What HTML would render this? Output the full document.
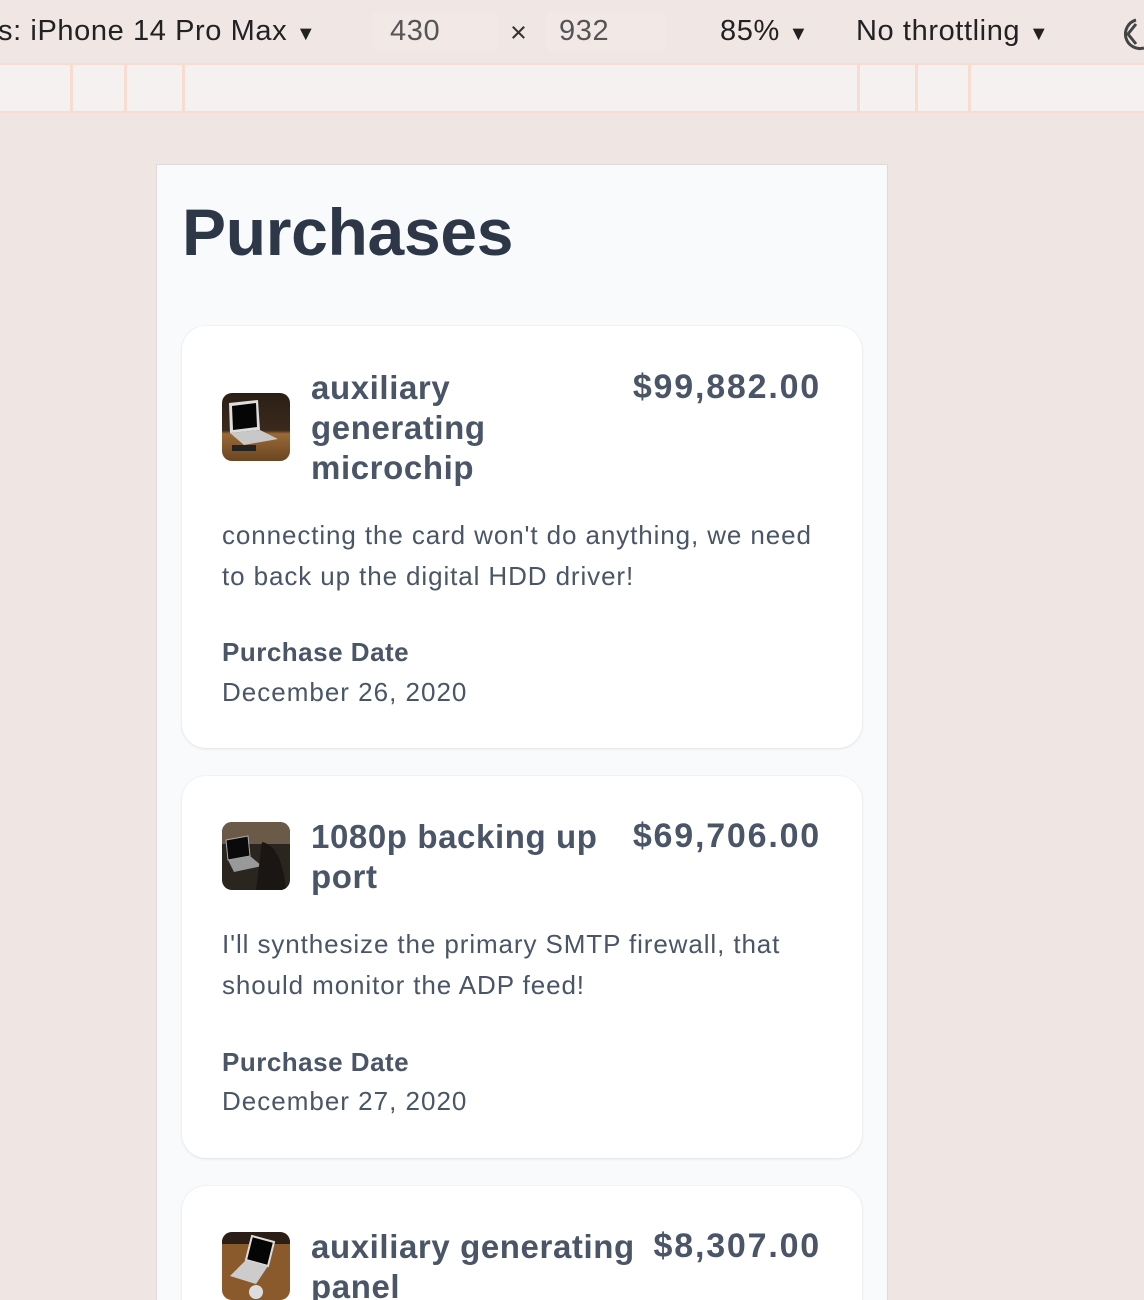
<!DOCTYPE html>
<html><head><meta charset="utf-8"><style>
*{margin:0;padding:0;box-sizing:border-box}
html{width:1144px;height:1300px;overflow:hidden}
body{width:1144px;height:1300px;overflow:hidden;background:#efe5e3;font-family:"Liberation Sans",Arial,sans-serif;position:relative}
.a{position:absolute;white-space:nowrap}
.top{position:absolute;left:0;top:0;width:1144px;height:63px;background:#f0e6e4;font-size:29px;color:#222;letter-spacing:0.6px}
.ruler{position:absolute;left:0;top:63px;width:1144px;height:50px;background:#f6f1f1;border-top:2px solid #f7dccf;border-bottom:2px solid #f7dccf}
.tick{position:absolute;top:0;width:3px;height:46px;background:#f7dccf}
.box{position:absolute;border-radius:6px;background:#f2e9e7;color:#555}
.panel{position:absolute;left:156px;top:164px;width:732px;height:1140px;background:#f8fafc;border:1px solid #dcdadc}
.card{position:absolute;left:182px;width:680px;background:#fff;border-radius:24px;box-shadow:0 1px 3px rgba(0,0,0,.08),0 0 0 1px rgba(0,0,0,.02);overflow:hidden}
.img{position:absolute;left:40px;width:68px;height:68px;border-radius:10px;overflow:hidden}
.t{position:absolute;left:129px;font-size:33px;font-weight:bold;line-height:40px;color:#4a5568;white-space:nowrap;letter-spacing:0.6px}
.p{position:absolute;right:41px;font-size:34px;font-weight:bold;color:#4a5568;white-space:nowrap;letter-spacing:1.8px}
.d{position:absolute;left:40px;font-size:26px;line-height:41px;color:#4a5568;white-space:nowrap;letter-spacing:0.9px}
.l{position:absolute;left:40px;font-size:26px;font-weight:bold;color:#4a5568;letter-spacing:0.5px}
.dt{position:absolute;left:40px;font-size:26px;color:#4a5568;letter-spacing:1px}
</style></head><body>
<div class="top">
<div class="a" style="left:-2px;top:15px">s: iPhone 14 Pro Max <span style="font-size:20px">▼</span></div>
<div class="box" style="left:372px;top:11px;width:126px;height:40px"></div>
<div class="a" style="left:390px;top:15px;color:#555">430</div>
<div class="a" style="left:510px;top:17px;color:#333">×</div>
<div class="box" style="left:546px;top:11px;width:120px;height:40px"></div>
<div class="a" style="left:559px;top:15px;color:#555">932</div>
<div class="a" style="left:720px;top:15px">85% <span style="font-size:20px">▼</span></div>
<div class="a" style="left:856px;top:15px">No throttling <span style="font-size:20px">▼</span></div>
<svg class="a" style="left:1124px;top:14px" width="24" height="38" viewBox="0 0 24 38"><path d="M12 6 A12 12 0 1 0 20 34" fill="none" stroke="#444" stroke-width="3"/><path d="M12 10 L4 20 L12 30" fill="none" stroke="#444" stroke-width="3"/></svg>
</div>
<div class="ruler">
<div class="tick" style="left:70px"></div><div class="tick" style="left:124px"></div><div class="tick" style="left:182px"></div>
<div class="tick" style="left:857px"></div><div class="tick" style="left:915px"></div><div class="tick" style="left:968px"></div>
</div>
<div class="panel"></div>
<div class="a" style="left:182px;top:194px;font-size:66px;font-weight:bold;color:#2d3748;letter-spacing:-0.3px">Purchases</div>

<svg width="0" height="0" style="position:absolute"><defs>
<linearGradient id="g1" x1="0" y1="0" x2="0" y2="1"><stop offset="0" stop-color="#2a1e16"/><stop offset=".55" stop-color="#3b2a1c"/><stop offset=".6" stop-color="#9a6a36"/><stop offset="1" stop-color="#6b4522"/></linearGradient>
</defs></svg>

<div class="card" style="top:326px;height:422px">
<div class="img" style="top:67px"><svg width="68" height="68"><rect width="68" height="68" fill="url(#g1)"/><path d="M7 10 L36 7 L38 37 L8 40Z" fill="#ddd"/><path d="M10 13 L34 10 L35 34 L11 37Z" fill="#050505"/><path d="M8 40 L38 37 L56 46 L22 52Z" fill="#c8c8c8"/><rect x="10" y="52" width="24" height="6" fill="#222"/></svg></div>
<div class="t" style="top:42px">auxiliary<br>generating<br>microchip</div>
<div class="p" style="top:42px">$99,882.00</div>
<div class="d" style="top:189px">connecting the card won't do anything, we need<br>to back up the digital HDD driver!</div>
<div class="l" style="top:311px">Purchase Date</div>
<div class="dt" style="top:351px">December 26, 2020</div>
</div>

<div class="card" style="top:776px;height:382px">
<div class="img" style="top:46px"><svg width="68" height="68"><rect width="68" height="68" fill="#2b2520"/><rect x="0" y="0" width="68" height="22" fill="#6b5a48"/><path d="M4 18 L26 14 L28 34 L6 38Z" fill="#0a0a0a" stroke="#aaa"/><path d="M6 38 L28 34 L40 44 L12 50Z" fill="#999"/><path d="M40 20 Q60 24 64 68 L34 68Z" fill="#1a1614"/></svg></div>
<div class="t" style="top:41px">1080p backing up<br>port</div>
<div class="p" style="top:41px">$69,706.00</div>
<div class="d" style="top:148px">I'll synthesize the primary SMTP firewall, that<br>should monitor the ADP feed!</div>
<div class="l" style="top:271px">Purchase Date</div>
<div class="dt" style="top:310px">December 27, 2020</div>
</div>

<div class="card" style="top:1186px;height:114px;border-radius:24px 24px 0 0">
<div class="img" style="top:46px"><svg width="68" height="68"><rect width="68" height="68" fill="#8a5a2c"/><rect width="68" height="12" fill="#2a1e16"/><path d="M30 4 L52 10 L46 34 L24 28Z" fill="#050505" stroke="#ddd" stroke-width="2"/><path d="M24 28 L46 34 L34 52 L8 44Z" fill="#ccc"/><circle cx="34" cy="60" r="7" fill="#ddd"/></svg></div>
<div class="t" style="top:41px">auxiliary generating<br>panel</div>
<div class="p" style="top:41px">$8,307.00</div>
</div>
</body></html>
